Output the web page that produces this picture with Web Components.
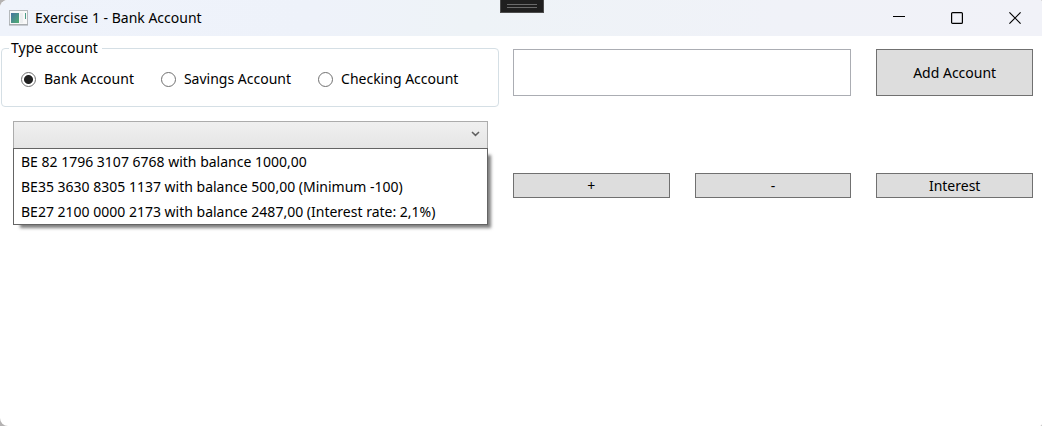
<!DOCTYPE html>
<html lang="en">
<head>
<meta charset="utf-8">
<title>Exercise 1 - Bank Account</title>
<style>
  body { margin: 0; background: #b4b2b2; color: #000; font: 14px/20px "Noto Sans", "Open Sans", sans-serif; }
</style>
</head>
<body>
<app-window>
  <title-bar slot="title">Exercise 1 - Bank Account</title-bar>
  <account-form></account-form>
</app-window>

<script>
const define = (name, html, setup) => customElements.define(name, class extends HTMLElement {
  constructor() {
    super();
    this.attachShadow({ mode: "open" }).innerHTML = html;
    if (setup) setup(this, this.shadowRoot);
  }
});

define("app-window", `
  <style>
    :host { display: flex; flex-direction: column; min-height: 100vh; background: #fff; border-radius: 8px 2px 2px 8px; overflow: hidden; }
  </style>
  <slot name="title"></slot>
  <slot></slot>`);

define("title-bar", `
  <style>
    :host { display: flex; align-items: center; height: 36px; padding-left: 9px; position: relative;
            background: linear-gradient(90deg, #eff3fb 0, #eef2fa 30%, #eef3f7 45%, #f0f2f8 75%, #f1f2f8 100%); }
    h1 { flex: 1; margin: 0 0 0 7px; font: inherit; }
    svg { display: block; }
    .controls { display: flex; gap: 4px; }
    button { width: 54px; height: 36px; padding: 0; border: 0; background: none; display: grid; place-items: center; }
    .grip { position: absolute; top: 0; left: 48%; width: 42px; height: 12px; border: 1px solid #4c4c4c; border-top: 0; background: #1f1f1f; }
    .grip svg { margin: 3px auto 0; }
  </style>
  <svg width="19" height="16" viewBox="0 0 19 16" aria-hidden="true">
    <defs><linearGradient id="g" x1="0" y1="0" x2="1" y2="1"><stop stop-color="#4574a0"/><stop offset="1" stop-color="#4fae72"/></linearGradient></defs>
    <rect x=".5" y=".5" width="18" height="14" fill="#f8f8f8" stroke="#b5b9bc"/>
    <path d="M0 15h19" stroke="#9da1a5"/>
    <rect x="2" y="3" width="8" height="10" fill="url(#g)"/>
    <path d="M11 3h3v10h-3z" fill="#eceeef"/>
    <path d="M16 3h1v6h-1z" fill="#4b9c86"/>
  </svg>
  <h1><slot></slot></h1>
  <div class="controls">
    <button aria-label="Minimize"><svg width="12" height="12"><path d="M0 4.5h12" stroke="#000"/></svg></button>
    <button aria-label="Maximize"><svg width="12" height="12"><rect x=".6" y=".6" width="10.8" height="10.8" rx="1" fill="none" stroke="#000" stroke-width="1.2"/></svg></button>
    <button aria-label="Close"><svg width="12" height="12"><path d="M.4.4l11.2 11.2M11.6.4.4 11.6" stroke="#000" stroke-width="1.2"/></svg></button>
  </div>
  <div class="grip"><svg width="30" height="5"><path d="M0 1.5h30M0 4.5h30" stroke="#6a6a6a"/></svg></div>`);

define("radio-option", `
  <style>
    :host { display: block; }
    label { display: flex; align-items: center; gap: 8px; }
    input { appearance: none; flex: none; box-sizing: border-box; width: 15px; height: 15px; margin: 0; border: 1px solid #707070; border-radius: 50%; background: #fff; }
    input:checked { background: radial-gradient(circle, #212121 4px, #fff 5px); }
  </style>
  <label><input type="radio"><span><slot></slot></span></label>`,
  (host, root) => {
    const input = root.querySelector("input");
    input.checked = host.hasAttribute("checked");
    input.addEventListener("change", () => {
      for (const other of host.parentNode.querySelectorAll("radio-option"))
        if (other !== host) other.shadowRoot.querySelector("input").checked = false;
    });
  });

define("account-type", `
  <style>
    :host { display: block; }
    fieldset { box-sizing: border-box; height: 69px; margin: 0; padding: 11px 19px 0; border: 1px solid #d5dfe5; border-radius: 4px; min-width: 0; }
    legend { margin-left: -12px; padding: 0 4px 0 2px; line-height: 20px; }
    .options { display: flex; gap: 27px; white-space: nowrap; }
  </style>
  <fieldset>
    <legend>Type account</legend>
    <div class="options">
      <radio-option checked>Bank Account</radio-option>
      <radio-option>Savings Account</radio-option>
      <radio-option>Checking Account</radio-option>
    </div>
  </fieldset>`);

define("account-picker", `
  <style>
    :host { display: block; position: relative; }
    select { appearance: none; display: block; box-sizing: border-box; width: 100%; height: 28px; border: 1px solid #acacac; border-radius: 0; background: linear-gradient(#f0f0f0, #e5e5e5); font: inherit; }
    svg { position: absolute; right: 8px; top: 10px; pointer-events: none; }
    ul { position: absolute; top: 27px; left: 0; right: 0; margin: 0; padding: 0; list-style: none; border: 1px solid #646464; background: #fff; box-shadow: 5px 5px 3px -2px #00000080; }
    li { padding: 0 7px; line-height: 25px; white-space: nowrap; }
  </style>
  <select aria-label="Account"></select>
  <svg width="9" height="6"><path d="M1 1l3.5 3.4L8 1" fill="none" stroke="#606060" stroke-width="1.5"/></svg>
  <ul role="listbox" aria-label="Accounts">
    <li role="option">BE 82 1796 3107 6768 with balance 1000,00</li>
    <li role="option">BE35 3630 8305 1137 with balance 500,00 (Minimum -100)</li>
    <li role="option">BE27 2100 0000 2173 with balance 2487,00 (Interest rate: 2,1%)</li>
  </ul>`);

define("push-button", `
  <style>
    :host { display: grid; }
    button { min-height: 25px; padding: 0; border: 1px solid #707070; border-radius: 0; background: #ddd; color: inherit; font: inherit; line-height: 20px; }
  </style>
  <button type="button"><slot></slot></button>`);

define("account-form", `
  <style>
    :host { display: grid; grid-template-columns: 498fr 520fr; gap: 14px; padding: 2px 9px 0 1px; align-items: start; }
    account-picker { margin: 14px 11px 0 12px; }
    .actions { display: grid; grid-template-columns: repeat(3, 1fr); column-gap: 25px; row-gap: 77px; padding-top: 11px; }
    input { grid-column: span 2; box-sizing: border-box; width: 100%; height: 47px; padding: 0 4px; border: 1px solid #abadb3; border-radius: 0; background: #fff; font: inherit; }
  </style>
  <div>
    <account-type></account-type>
    <account-picker></account-picker>
  </div>
  <div class="actions">
    <input type="text" aria-label="Account details">
    <push-button>Add Account</push-button>
    <push-button>+</push-button>
    <push-button>-</push-button>
    <push-button>Interest</push-button>
  </div>`);
</script>
</body>
</html>
